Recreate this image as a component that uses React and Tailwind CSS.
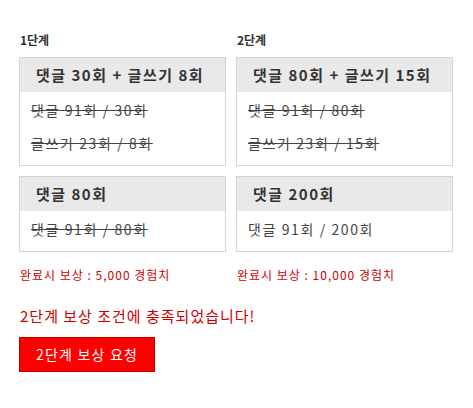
import React from "react";

const FONT = { fontFamily: '"Noto Sans CJK KR", "Noto Sans", sans-serif' };

const stages = [
  {
    label: "1단계",
    reward: "완료시 보상 : 5,000 경험치",
    tasks: [
      {
        title: "댓글 30회 + 글쓰기 8회",
        lines: [
          { text: "댓글 91회 / 30회", done: true },
          { text: "글쓰기 23회 / 8회", done: true },
        ],
      },
      {
        title: "댓글 80회",
        lines: [{ text: "댓글 91회 / 80회", done: true }],
      },
    ],
  },
  {
    label: "2단계",
    reward: "완료시 보상 : 10,000 경험치",
    tasks: [
      {
        title: "댓글 80회 + 글쓰기 15회",
        lines: [
          { text: "댓글 91회 / 80회", done: true },
          { text: "글쓰기 23회 / 15회", done: true },
        ],
      },
      {
        title: "댓글 200회",
        lines: [{ text: "댓글 91회 / 200회", done: false }],
      },
    ],
  },
];

function TaskBox({ task, first }) {
  return (
    <div className={`border border-[#d5d5d5] bg-white ${first ? "" : "mt-[10px]"}`}>
      <div className="flex h-[34px] items-center bg-[#e9e9e9] pl-[16px] text-[15px] font-bold tracking-[1.5px] text-[#333]">
        {task.title}
      </div>
      <div className="pl-[11px] pt-[2px] pb-[5px] text-[14px] tracking-[1.6px] text-[#444]">
        {task.lines.map((line) => (
          <div key={line.text} className={`leading-[33px] ${line.done ? "line-through" : ""}`}>
            {line.text}
          </div>
        ))}
      </div>
    </div>
  );
}

export default function App() {
  return (
    <div className="min-h-[408px] bg-white pl-[19px] pt-[32px]" style={FONT}>
      <div className="grid w-[434px] grid-cols-2">
        {stages.map((stage, i) => (
          <div key={stage.label} className={i === 0 ? "pr-[10px]" : ""}>
            <div className="mb-[9px] pl-[1px] text-[12px] font-bold leading-[16px] text-[#333]">
              {stage.label}
            </div>
            {stage.tasks.map((task, j) => (
              <TaskBox key={task.title} task={task} first={j === 0} />
            ))}
            <div className="mt-[15px] pl-[1px] text-[12px] leading-[16px] tracking-[1px] text-[#cc0000]">
              {stage.reward}
            </div>
          </div>
        ))}
      </div>
      <div className="mt-[24px] pl-[1px] text-[15px] leading-[18px] tracking-[1px] text-[#cc0000]">
        2단계 보상 조건에 충족되었습니다!
      </div>
      <button
        type="button"
        className="mt-[12px] flex h-[35px] w-[136px] items-center justify-center border border-[#c00000] bg-[#ff0000] text-[14px] tracking-[1.2px] text-white"
      >
        2단계 보상 요청
      </button>
    </div>
  );
}
